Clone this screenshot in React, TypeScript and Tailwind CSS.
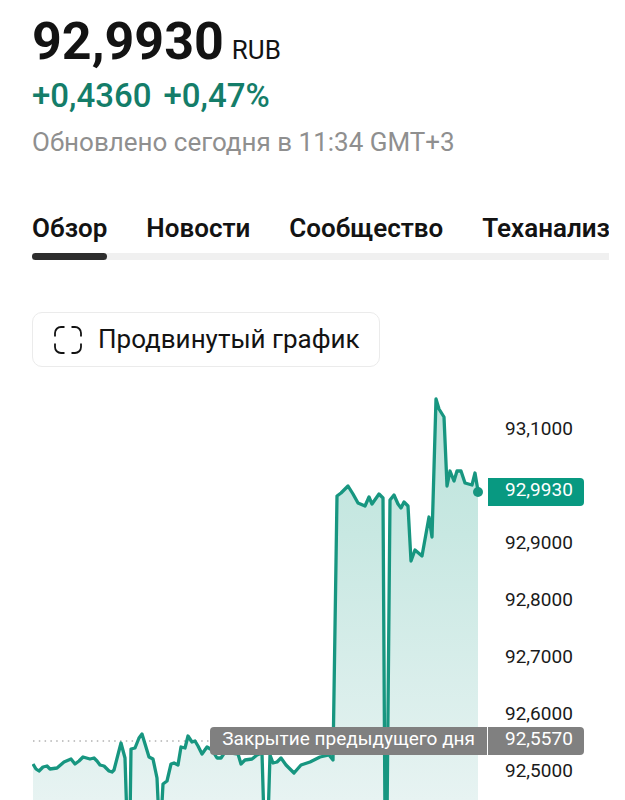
import React, { useState } from 'react';

const TABS = ['Обзор', 'Новости', 'Сообщество', 'Теханализ'];

// The 93,0000 row stays empty, the current price tag covers it
const TICKS = ['93,1000', '', '92,9000', '92,8000', '92,7000', '92,6000', '92,5000'];

const PLOT_WIDTH = 447;
const PLOT_HEIGHT = 409;

// Line points in plot units
const POINTS: [number, number][] = [
  [1, 373], [4, 378], [7, 380], [11, 376], [15, 375], [18, 378], [25, 377], [32, 371], [39, 368],
  [43, 373], [47, 370], [51, 366], [58, 368], [62, 367], [65, 370], [68, 374], [72, 375], [77, 380],
  [80, 381], [82, 379], [89, 352], [93, 367], [95, 430], [98, 430], [99, 358], [103, 357], [107, 347],
  [110, 343], [117, 366], [121, 368], [125, 387], [127, 430], [129, 430], [131, 393], [135, 390],
  [139, 373], [142, 372], [146, 374], [149, 356], [153, 357], [156, 345], [160, 351], [163, 350],
  [166, 355], [170, 363], [175, 356], [180, 359], [185, 367], [189, 367], [193, 361], [206, 363],
  [209, 373], [213, 369], [220, 368], [225, 364], [230, 362], [232, 430], [236, 430], [238, 364],
  [241, 372], [245, 371], [249, 367], [254, 374], [262, 382], [269, 374], [278, 371], [288, 366],
  [297, 364], [301, 369], [305, 105], [309, 102], [316, 95], [321, 103], [326, 112], [333, 115],
  [337, 106], [340, 113], [347, 103], [351, 107], [353, 430], [355, 430], [358, 109], [362, 104],
  [366, 113], [369, 117], [372, 111], [376, 115], [379, 170], [383, 159], [390, 165], [397, 126],
  [400, 146], [404, 8], [407, 18], [412, 26], [415, 95], [418, 80], [422, 90], [425, 80], [429, 80],
  [433, 92], [440, 94], [443, 82], [446, 100],
];

const linePath = 'M' + POINTS.map(([x, y]) => `${x} ${y}`).join('L');
const areaPath = `${linePath}V430H1Z`;

const priceToY = (price: number) => Math.round(40 + (93.1 - price) * 570);

const FullscreenIcon = () => (
  <svg className="h-7 w-7" viewBox="0 0 28 28" fill="none" stroke="#131313" strokeWidth="1.8">
    <path d="M1 10.5V7a6 6 0 0 1 6-6h3.5M17.5 1H21a6 6 0 0 1 6 6v3.5M27 17.5V21a6 6 0 0 1-6 6h-3.5M10.5 27H7a6 6 0 0 1-6-6v-3.5" />
  </svg>
);

const Tabs = () => {
  const [active, setActive] = useState(TABS[0]);

  return (
    <div className="mt-[46px] overflow-x-auto [scrollbar-width:none]">
      <div role="tablist" className="flex w-max min-w-full gap-[39px] border-b-[7px] border-[#f0f0f0]">
        {TABS.map((tab) => (
          <button
            key={tab}
            type="button"
            role="tab"
            aria-selected={tab === active}
            onClick={() => setActive(tab)}
            className="relative pb-[9px] text-[26px] leading-8 font-semibold"
          >
            {tab}
            {tab === active && (
              <span className="absolute inset-x-0 -bottom-[7px] h-[7px] rounded-full bg-[#2e2e2e]" />
            )}
          </button>
        ))}
      </div>
    </div>
  );
};

const Chart = () => (
  <div className="relative mt-6 flex">
    <svg
      className="h-[409px] min-w-0 flex-1"
      viewBox={`0 0 ${PLOT_WIDTH} ${PLOT_HEIGHT}`}
      preserveAspectRatio="none"
    >
      <defs>
        <linearGradient id="area" gradientUnits="userSpaceOnUse" x1="0" y1="0" x2="0" y2={PLOT_HEIGHT}>
          <stop offset="0" stopColor="#bce3db" />
          <stop offset="0.35" stopColor="#c8e8e2" />
          <stop offset="1" stopColor="#e7f3f2" />
        </linearGradient>
      </defs>
      <path d={areaPath} fill="url(#area)" />
      <path d="M1 350H446" stroke="#8a8a8a" strokeWidth="1" strokeDasharray="1.5 4.3" />
      <path d={linePath} fill="none" stroke="#179680" strokeWidth="3.3" strokeLinejoin="round" />
    </svg>
    <div className="w-[130px] pt-[10px] pl-[26px] text-[19px] text-[#1a1a1a]">
      {TICKS.map((tick, i) => (
        <div key={i} className="flex h-[57px] items-center">{tick}</div>
      ))}
    </div>

    <span
      className="absolute right-[126px] h-[10px] w-[10px] -translate-y-1/2 rounded-full bg-[#179680]"
      style={{ top: priceToY(92.993) }}
    />
    <div
      className="absolute right-[25px] h-7 w-24 -translate-y-1/2 rounded-r bg-[#089981] pl-[17px] text-[19px] leading-6 text-white"
      style={{ top: priceToY(92.993) }}
    >
      92,9930
    </div>
    <div
      className="absolute right-[25px] flex h-7 -translate-y-1/2 text-[19px] leading-6 text-white"
      style={{ top: priceToY(92.557) }}
    >
      <span className="rounded-l bg-[#808080] px-3">Закрытие предыдущего дня</span>
      <span className="ml-px w-24 rounded-r bg-[#808080] pl-[17px]">92,5570</span>
    </div>
  </div>
);

export default function App() {
  return (
    <main className="overflow-hidden bg-white pt-[10px] pr-4 pl-8 font-['Roboto',sans-serif] text-[#131313]">
      <h1 className="flex items-baseline gap-2 text-[52px] leading-[64px] font-bold">
        92,9930
        <span className="text-[26px] leading-8 font-normal">RUB</span>
      </h1>
      <p className="flex gap-3 text-[33px] leading-[44px] font-medium text-[#147d69]">
        <span>+0,4360</span>
        <span>+0,47%</span>
      </p>
      <p className="text-[26px] leading-[48px] text-[#8f8f8f]">Обновлено сегодня в 11:34 GMT+3</p>

      <Tabs />

      <button
        type="button"
        className="mt-[52px] flex h-[55px] items-center gap-4 rounded-[10px] border border-[#ebebeb] pr-[19px] pl-[21px] text-[26px]"
      >
        <FullscreenIcon />
        Продвинутый график
      </button>

      <Chart />
    </main>
  );
}
